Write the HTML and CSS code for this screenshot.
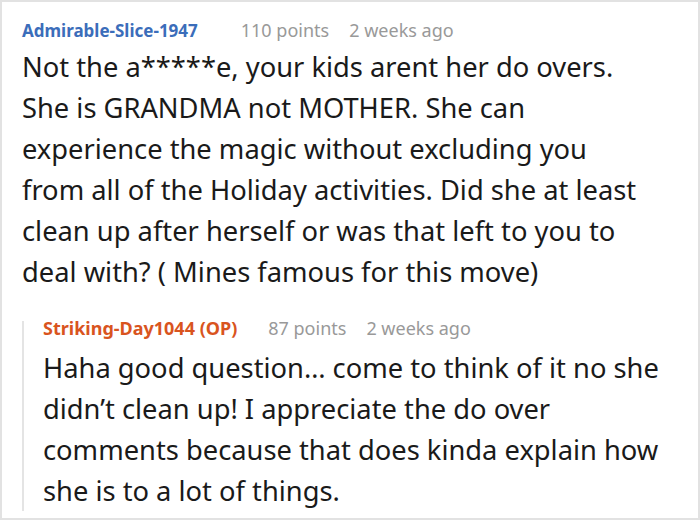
FILE: index.html
```html
<!DOCTYPE html>
<html>
<head>
<meta charset="utf-8">
<link rel="stylesheet" href="styles.css">
</head>
<body>
<div class="frame">
  <div class="comment">
    <div class="meta">
      <span class="author">Admirable-Slice-1947</span>
      <span class="info">110 points</span>
      <span class="info">2 weeks ago</span>
    </div>
    <p class="body main">Not the a*****e, your kids arent her do overs. She is GRANDMA not MOTHER. She can experience the magic without excluding you from all of the Holiday activities. Did she at least clean up after herself or was that left to you to deal with? ( Mines famous for this move)</p>
    <div class="reply">
      <div class="meta">
        <span class="author op">Striking-Day1044 (OP)</span>
        <span class="info">87 points</span>
        <span class="info">2 weeks ago</span>
      </div>
      <p class="body">Haha good question… come to think of it no she didn’t clean up! I appreciate the do over comments because that does kinda explain how she is to a lot of things.</p>
    </div>
  </div>
</div>
</body>
</html>
```
FILE: styles.css
```css
html, body {
  margin: 0;
  padding: 0;
  background: #fff;
}
.frame {
  box-sizing: border-box;
  width: 700px;
  height: 520px;
  border: 2px solid #e2e2e2;
  overflow: hidden;
  font-family: "Noto Sans", "Open Sans", sans-serif;
}
.comment {
  padding: 16px 20px 0 20px;
}
.meta {
  display: flex;
  align-items: baseline;
  gap: 20px;
  font-size: 17px;
  line-height: 24px;
}
.author {
  font-weight: 700;
  color: #3b6dba;
  margin-right: 23px;
}
.author.op {
  color: #d9541e;
  font-size: 18px;
  margin-right: 11px;
}
.info {
  color: #999;
  font-size: 18px;
}
.body {
  margin: 3px 0 0 0;
  font-size: 27.3px;
  line-height: 41px;
  color: #1a1a1a;
}
.body.main {
  width: 634px;
}
.reply {
  margin-top: 29px;
  border-left: 2px solid #e4e4e4;
  padding-left: 19px;
}
.reply .meta {
  line-height: 14px;
}
.reply .body {
  margin-top: 12px;
}
```
